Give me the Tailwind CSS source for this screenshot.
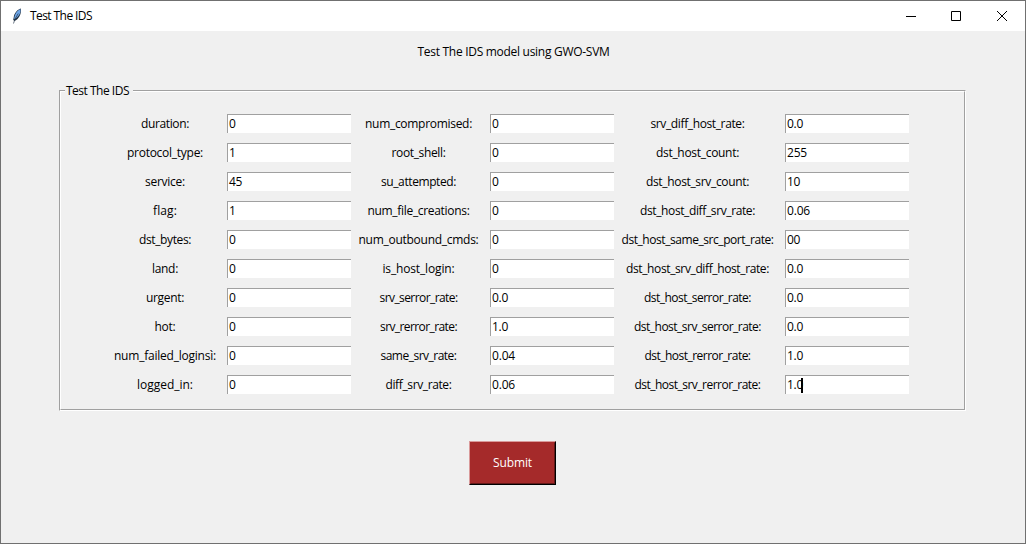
<!DOCTYPE html>
<html lang="en">
<head>
<meta charset="utf-8">
<title>Test The IDS</title>
<script src="https://cdn.jsdelivr.net/npm/@tailwindcss/browser@4"></script>
</head>
<body class="w-[1026px] h-[544px] overflow-hidden font-['Open_Sans','Noto_Sans',sans-serif] text-[12px] leading-[16px] text-black">
<div class="w-full h-full border border-[#707070] bg-[#f0f0f0] flex flex-col">
  <header class="h-[30px] shrink-0 bg-white flex items-center">
    <svg class="w-4 h-4 ml-2 shrink-0" viewBox="0 0 16 16">
      <path d="M11.8 .5C8.5 1.5 5.2 5 4.7 9.5L4.2 12L5.5 13C9.5 11.5 12.8 6 11.8 .5Z" fill="#1d2c3c"/>
      <path d="M11.4 1C8.2 2.6 5.4 6.2 5.1 11.2C9.2 9.4 12.2 5.4 11.4 1Z" fill="#6ea6e8"/>
      <path d="M9.2 5.5L6 11L4.5 15.5" fill="none" stroke="#26384c" stroke-width=".7"/>
    </svg>
    <span class="ml-[5px] flex-1 whitespace-nowrap"><span data-w="62">Test The IDS</span></span>
    <div class="w-[45px] h-full flex items-center justify-start pl-[17px]"><svg class="w-[10px] h-[10px]" viewBox="0 0 10 10"><path d="M0 5.5H10" stroke="#000"/></svg></div>
    <div class="w-[46px] h-full flex items-center justify-start pl-[17px]"><svg class="w-[10px] h-[10px]" viewBox="0 0 10 10"><path d="M.5 .5H9.5V9.5H.5Z" fill="none" stroke="#000"/></svg></div>
    <div class="w-[45px] h-full flex items-center justify-start pl-[17px]"><svg class="w-[10px] h-[10px]" viewBox="0 0 10 10"><path d="M0 0L10 10M10 0L0 10" stroke="#000"/></svg></div>
  </header>
  <main class="flex-1 flex flex-col items-center pr-[1px]">
    <h1 class="mt-[13px] pl-[2px] whitespace-nowrap"><span data-w="192">Test The IDS model using GWO-SVM</span></h1>
    <section class="mt-[30px] w-[907px] h-[321px] border border-t-[#a0a0a0] border-l-[#a0a0a0] border-b-white border-r-white">
      <div class="w-full h-full border border-t-white border-l-white border-b-[#a0a0a0] border-r-[#a0a0a0]">
        <h2 class="-mt-[9px] ml-[4px] w-[68px] h-4 bg-[#f0f0f0] pl-[1px] whitespace-nowrap"><span data-w="63">Test The IDS</span></h2>
        <div id="fields" class="mt-[17px] ml-[42px] flex"></div>
      </div>
    </section>
    <button class="mt-[30px] w-[87px] h-[44px] bg-[#a52a2a] text-white border border-t-[#d99a9a] border-l-[#d99a9a] border-b-black border-r-black">
      <span class="flex w-full h-full items-center justify-center border border-t-[#a52a2a] border-l-[#a52a2a] border-b-[#631919] border-r-[#631919]"><span data-w="39">Submit</span></span>
    </button>
  </main>
</div>
<script>
const columns = [
  { cls: 'w-[124px] flex flex-col gap-[13px] items-center', rows: [
    ['duration:', 48, '0'], ['protocol_type:', 76, '1'], ['service:', 40, '45'], ['flag:', 24, '1'], ['dst_bytes:', 52, '0'],
    ['land:', 26, '0'], ['urgent:', 38, '0'], ['hot:', 21, '0'], ['num_failed_loginsì:', 102, '0'], ['logged_in:', 56, '0']] },
  { cls: 'w-[139px] pr-[4px] flex flex-col gap-[13px] items-center', rows: [
    ['num_compromised:', 107, '0'], ['root_shell:', 54, '0'], ['su_attempted:', 75, '0'], ['num_file_creations:', 102, '0'], ['num_outbound_cmds:', 120, '0'],
    ['is_host_login:', 72, '0'], ['srv_serror_rate:', 78, '0.0'], ['srv_rerror_rate:', 77, '1.0'], ['same_srv_rate:', 76, '0.04'], ['diff_srv_rate:', 66, '0.06']] },
  { cls: 'w-[171px] pr-[4px] flex flex-col gap-[13px] items-center', rows: [
    ['srv_diff_host_rate:', 94, '0.0'], ['dst_host_count:', 83, '255'], ['dst_host_srv_count:', 103, '10'], ['dst_host_diff_srv_rate:', 115, '0.06'], ['dst_host_same_src_port_rate:', 152, '00'],
    ['dst_host_srv_diff_host_rate:', 143, '0.0'], ['dst_host_serror_rate:', 107, '0.0'], ['dst_host_srv_serror_rate:', 127, '0.0'], ['dst_host_rerror_rate:', 106, '1.0'], ['dst_host_srv_rerror_rate:', 126, '1.0']] }
];
const valueWidth = { 1: 7, 2: 13, 3: 16, 4: 23 };
document.getElementById('fields').innerHTML = columns.map((c, ci) =>
  `<div class="${c.cls}">` + c.rows.map(([l, w]) => `<div class="h-4 whitespace-nowrap"><span data-w="${w}">${l}</span></div>`).join('') + '</div>' +
  '<div class="w-[124px] -mt-[2px] flex flex-col gap-[10px]">' + c.rows.map(([, , v], ri) => {
    const w = v === '255' ? 20 : valueWidth[v.length];
    const caret = ci === 2 && ri === 9 ? '<i class="w-[2px] h-[15px] -ml-[2px] bg-black"></i>' : '';
    return `<div class="h-[19px] bg-white border-t border-l border-[#a0a0a0] pl-[1px] flex items-center whitespace-nowrap"><span data-w="${w}">${v}</span>${caret}</div>`;
  }).join('') + '</div>').join('');

// Space each text run to its nominal width.
const measure = document.createElement('canvas').getContext('2d');
measure.font = '12px "Open Sans"';
for (const el of document.querySelectorAll('[data-w]')) {
  const natural = measure.measureText(el.textContent).width;
  el.style.letterSpacing = (Number(el.dataset.w) - natural) / el.textContent.length + 'px';
}
</script>
</body>
</html>
